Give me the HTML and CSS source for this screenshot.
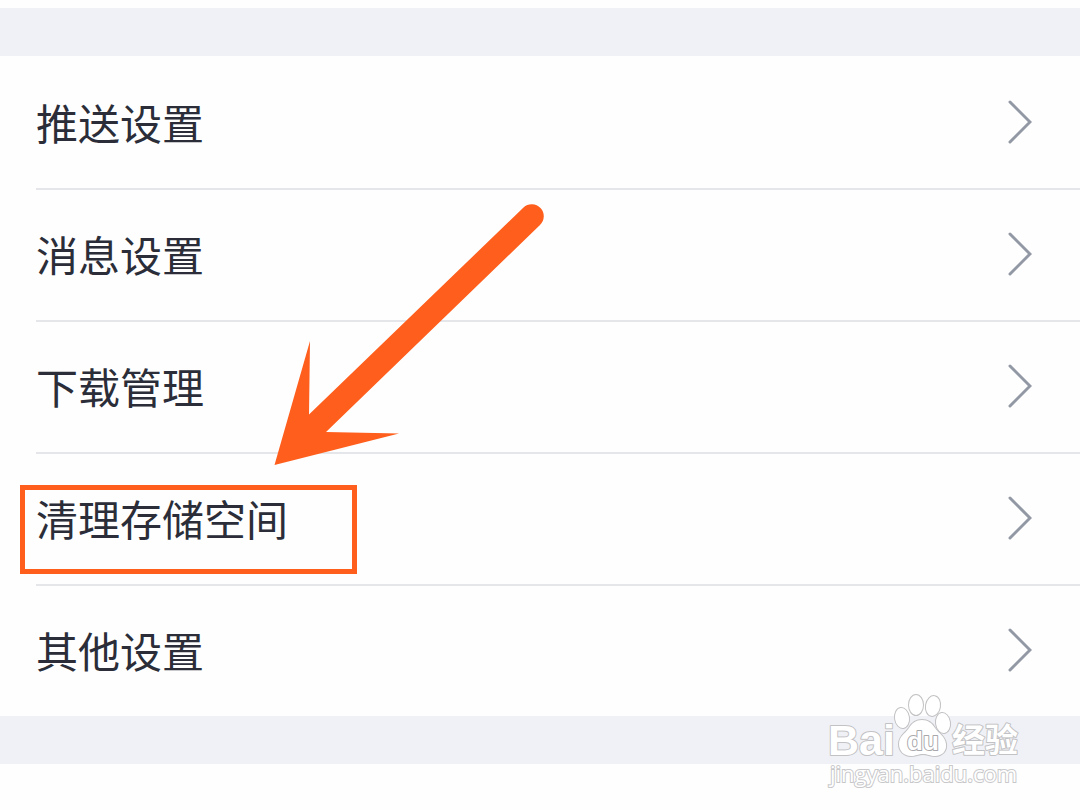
FILE: index.html
```html
<!DOCTYPE html>
<html lang="zh-CN">
<head>
<meta charset="utf-8">
<meta name="viewport" content="width=device-width, initial-scale=1">
<title>设置</title>
<link rel="stylesheet" href="styles.css">
</head>
<body>
<main class="page">
  <div class="band"></div>
  <ul class="list">
    <li class="item"><button class="row" type="button"><span class="label">推送设置</span><svg class="chevron" viewBox="0 0 24 44" aria-hidden="true"><path d="M2 2 22 22 2 42"/></svg></button></li>
    <li class="item"><button class="row" type="button"><span class="label">消息设置</span><svg class="chevron" viewBox="0 0 24 44" aria-hidden="true"><path d="M2 2 22 22 2 42"/></svg></button></li>
    <li class="item"><button class="row" type="button"><span class="label">下载管理</span><svg class="chevron" viewBox="0 0 24 44" aria-hidden="true"><path d="M2 2 22 22 2 42"/></svg></button></li>
    <li class="item">
      <button class="row" type="button"><span class="label">清理存储空间</span><svg class="chevron" viewBox="0 0 24 44" aria-hidden="true"><path d="M2 2 22 22 2 42"/></svg></button>
      <span class="highlight"></span>
      <svg class="arrow" viewBox="0 0 280 270" aria-hidden="true"><path d="M4.500 265 40 141 39 214.500 253.500 7.500A12 12 0 0 1 270 25L56 232 129 233.500Z"/></svg>
    </li>
    <li class="item"><button class="row" type="button"><span class="label">其他设置</span><svg class="chevron" viewBox="0 0 24 44" aria-hidden="true"><path d="M2 2 22 22 2 42"/></svg></button></li>
  </ul>
  <div class="band">
    <div class="watermark">
      <svg class="logo" viewBox="0 0 210 70" role="img" aria-label="Baidu 经验">
        <text class="mark brand" x="8" y="65">Bai</text>
        <g class="mark">
          <ellipse cx="82" cy="28" rx="7" ry="10" transform="rotate(-8 82 28)"/>
          <ellipse cx="96" cy="15" rx="7" ry="10"/>
          <ellipse cx="113" cy="16" rx="7" ry="10" transform="rotate(10 113 16)"/>
          <ellipse cx="123" cy="33" rx="7" ry="10" transform="rotate(-8 123 33)"/>
          <path d="M102 30C96 30 92 33 89 38 85 44 79 46 79 54 79 61 84 66 91 66 96 66 98 64 103 64 108 64 110 66 115 66 122 66 127 61 126 54 125 46 119 44 115 38 112 33 108 30 102 30Z"/>
        </g>
        <text class="mark du" x="87" y="60">du</text>
        <text class="mark cn" x="132" y="62">经验</text>
      </svg>
      <span class="url">jingyan.baidu.com</span>
    </div>
  </div>
</main>
</body>
</html>
```
FILE: styles.css
```css
* {
  box-sizing: border-box;
}

body {
  margin: 0;
  background: #fefefe;
  color: #2b2d38;
  font-family: "Noto Sans CJK SC", sans-serif;
}

.page {
  min-height: 100vh;
  padding-top: 8px;
}

.band {
  position: relative;
  height: 48px;
  background: #f0f1f6;
}

.list {
  margin: 0;
  padding: 2px 0 0 36px;
  list-style: none;
}

.item {
  position: relative;
  border-bottom: 2px solid #e5e6ea;
}

.item:last-child {
  border-bottom: 0;
}

.row {
  display: flex;
  align-items: center;
  justify-content: space-between;
  width: 100%;
  height: 130px;
  padding: 0 48px 2px 0;
  border: 0;
  background: none;
  color: inherit;
  font: inherit;
  font-size: 42px;
  line-height: 60px;
  text-align: left;
  cursor: pointer;
}

.chevron {
  width: 24px;
  height: 44px;
  fill: none;
  stroke: #9299a5;
  stroke-width: 3;
  stroke-linecap: round;
}

.highlight {
  position: absolute;
  top: 31px;
  left: -16px;
  width: 337px;
  height: 89px;
  border: 5px solid #ff5e1c;
  pointer-events: none;
}

.arrow {
  position: absolute;
  top: -254px;
  left: 234px;
  width: 280px;
  height: 270px;
  fill: #ff5e1c;
  pointer-events: none;
}

.watermark {
  position: absolute;
  top: -26px;
  right: 50px;
  display: flex;
  flex-direction: column;
  width: 210px;
}

.logo {
  width: 210px;
  height: 70px;
  overflow: visible;
}

.mark {
  fill: #fff;
  stroke: #c2c2c4;
  stroke-width: 2;
  stroke-linejoin: round;
  paint-order: stroke;
}

.brand {
  font: bold 43px "Liberation Sans", sans-serif;
}

.du {
  stroke: #a8a8ac;
  font: bold 26px "Liberation Sans", sans-serif;
}

.cn {
  font: bold 33px "Noto Sans CJK SC", sans-serif;
}

.url {
  padding-left: 10px;
  color: #fff;
  font: 22px/26px "Open Sans", sans-serif;
  -webkit-text-stroke: 2px #c8c8ca;
  paint-order: stroke;
}
```
